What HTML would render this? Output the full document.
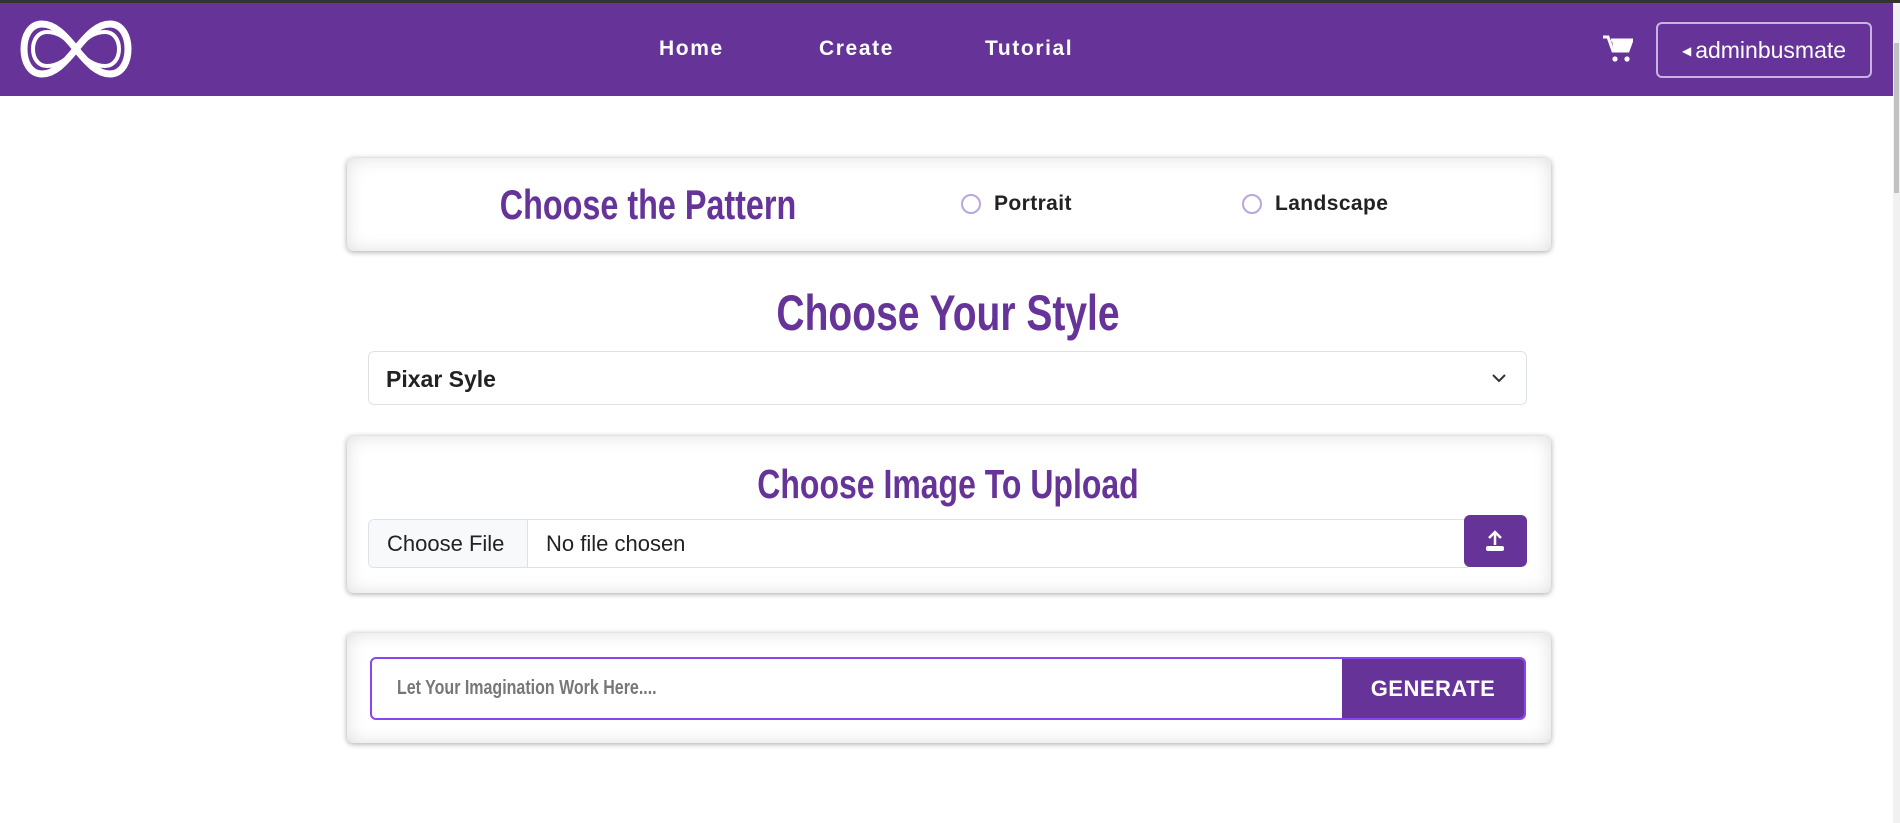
<!DOCTYPE html>
<html><head><meta charset="utf-8"><style>
*{box-sizing:border-box;margin:0;padding:0}
body{width:1900px;height:823px;overflow:hidden;background:#fff;font-family:"Liberation Sans",sans-serif;position:relative}
.top{position:absolute;left:0;top:0;width:1900px;height:3px;background:#333}
.nav{position:absolute;left:0;top:3px;width:1893px;height:93px;background:#663399}
.scroll{position:absolute;right:0;top:3px;width:7px;height:820px;background:#f1f1f1}
.scroll div{position:absolute;left:1px;top:40px;width:5px;height:150px;background:#c1c1c1}
.nl{position:absolute;top:37px;color:#fff;font-weight:bold;font-size:21px;letter-spacing:1.6px}
.btn{position:absolute;left:1656px;top:22px;width:216px;height:56px;border:2px solid #c8b4e3;border-radius:6px;color:#fff;font-size:23px;line-height:52px;text-align:center}
.card{position:absolute;left:347px;width:1204px;background:#fff;border-radius:6px;box-shadow:0 1px 6px rgba(0,0,0,.35),inset 0 0 18px rgba(0,0,0,.13)}
.h{position:absolute;color:#663399;font-weight:bold;white-space:nowrap}
.radio{position:absolute;width:20px;height:20px;border:2px solid #b9a6e0;border-radius:50%}
.lbl{position:absolute;font-size:21px;font-weight:bold;color:#222;letter-spacing:.4px}
</style></head><body>
<div class="top"></div>
<div class="nav"></div>
<div class="scroll"><div></div></div>
<svg style="position:absolute;left:20px;top:16px" width="112" height="66" viewBox="0 0 112 66">
<g fill="none" stroke="#fff">
<path d="M56 33 C44 18 34 8 22 8 C10 8 4 20 4 33 C4 46 10 58 22 58 C34 58 44 48 56 33 C68 18 78 8 90 8 C102 8 108 20 108 33 C108 46 102 58 90 58 C78 58 68 48 56 33Z" stroke-width="7"/>
<path d="M56 33 C46 22 38 16 27 16 C18 16 13 24 13 33 C13 42 18 50 27 50 C38 50 46 44 56 33 C66 22 74 16 85 16 C94 16 99 24 99 33 C99 42 94 50 85 50 C74 50 66 44 56 33Z" stroke-width="4"/>
</g></svg>
<div class="nl" style="left:659px">Home</div>
<div class="nl" style="left:819px">Create</div>
<div class="nl" style="left:985px">Tutorial</div>
<svg style="position:absolute;left:1603px;top:35px" width="30" height="28" viewBox="0 0 30 28"><path d="M0 2h5l5 14h15l4-11H8" fill="none" stroke="#fff" stroke-width="3"/><path d="M9 6h19l-3 10H11z" fill="#fff"/><circle cx="12" cy="24" r="2.6" fill="#fff"/><circle cx="24" cy="24" r="2.6" fill="#fff"/></svg>
<div class="btn"><span style="font-size:12px;vertical-align:3px;margin-right:4px">◀</span>adminbusmate</div>

<div class="card" style="top:158px;height:93px"></div>
<div class="h" style="left:648px;top:181px;font-size:42px;transform:translateX(-50%) scaleX(.77)">Choose the Pattern</div>
<div class="radio" style="left:961px;top:194px"></div>
<div class="lbl" style="left:994px;top:192px">Portrait</div>
<div class="radio" style="left:1242px;top:194px"></div>
<div class="lbl" style="left:1275px;top:192px">Landscape</div>

<div class="h" style="left:948px;top:284px;font-size:50px;transform:translateX(-50%) scaleX(.78)">Choose Your Style</div>
<div style="position:absolute;left:368px;top:351px;width:1159px;height:54px;border:1px solid #dee2e6;border-radius:6px"></div>
<div style="position:absolute;left:386px;top:366px;font-size:23px;font-weight:bold;color:#222">Pixar Syle</div>
<svg style="position:absolute;left:1491px;top:373px" width="16" height="10" viewBox="0 0 16 10"><path d="M2 2l6 6 6-6" fill="none" stroke="#333" stroke-width="2"/></svg>

<div class="card" style="top:436px;height:157px"></div>
<div class="h" style="left:948px;top:461px;font-size:41px;transform:translateX(-50%) scaleX(.78)">Choose Image To Upload</div>
<div style="position:absolute;left:368px;top:519px;width:1100px;height:49px;border:1px solid #dee2e6;border-radius:6px 0 0 6px;overflow:hidden;font-size:22px;color:#222">
<div style="position:absolute;left:0;top:0;width:159px;height:49px;background:#f8f9fa;border-right:1px solid #dee2e6;line-height:47px;padding-left:18px">Choose File</div>
<div style="position:absolute;left:177px;top:0;line-height:47px">No file chosen</div></div>
<div style="position:absolute;left:1464px;top:515px;width:63px;height:52px;background:#663399;border-radius:6px"></div>
<svg style="position:absolute;left:1484px;top:529px" width="22" height="24" viewBox="0 0 22 24"><path d="M11 16V3M5 9l6-6 6 6" fill="none" stroke="#fff" stroke-width="2.5"/><rect x="2" y="17" width="18" height="5" rx="2" fill="#fff"/></svg>

<div class="card" style="top:633px;height:110px"></div>
<div style="position:absolute;left:370px;top:657px;width:1156px;height:63px;border:2px solid #8a44f0;border-radius:6px;overflow:hidden">
<div style="position:absolute;left:25px;top:18px;font-weight:bold;font-size:20px;color:#777;transform-origin:left;transform:scaleX(.8);white-space:nowrap">Let Your Imagination Work Here....</div>
<div style="position:absolute;right:0;top:-2px;width:182px;height:63px;background:#663399;color:#fff;font-weight:bold;font-size:22px;line-height:63px;text-align:center;letter-spacing:.5px">GENERATE</div></div>
</body></html>
